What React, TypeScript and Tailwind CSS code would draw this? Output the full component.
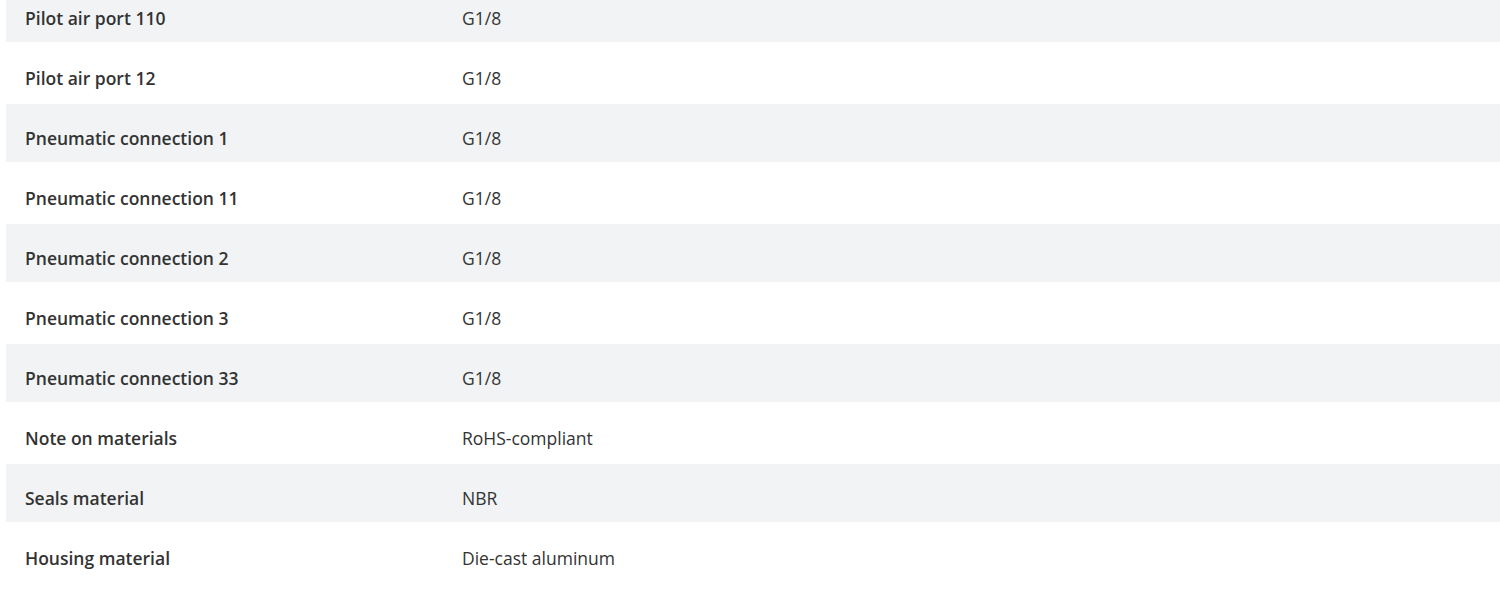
import React from "react";

const rows: [string, string][] = [
  ["Pilot air port 110", "G1/8"],
  ["Pilot air port 12", "G1/8"],
  ["Pneumatic connection 1", "G1/8"],
  ["Pneumatic connection 11", "G1/8"],
  ["Pneumatic connection 2", "G1/8"],
  ["Pneumatic connection 3", "G1/8"],
  ["Pneumatic connection 33", "G1/8"],
  ["Note on materials", "RoHS-compliant"],
  ["Seals material", "NBR"],
  ["Housing material", "Die-cast aluminum"],
];

export default function App() {
  return (
    <div
      className="w-[1500px] h-[608px] overflow-hidden bg-white text-[#333333]"
      style={{ fontFamily: "'Open Sans', 'Noto Sans', sans-serif" }}
    >
      <div className="-mt-4 pl-[6px]">
        {rows.map(([label, value], i) => (
          <div
            key={label}
            className={
              i % 2 === 0
                ? "flex h-[58px] items-center bg-[#f2f3f5] pt-[10px]"
                : "flex h-[62px] items-center bg-white pt-[10px]"
            }
          >
            <div className="w-[456px] pl-[19px] text-[17.5px] font-semibold leading-6">{label}</div>
            <div className="text-[17.5px] leading-6">{value}</div>
          </div>
        ))}
      </div>
    </div>
  );
}
